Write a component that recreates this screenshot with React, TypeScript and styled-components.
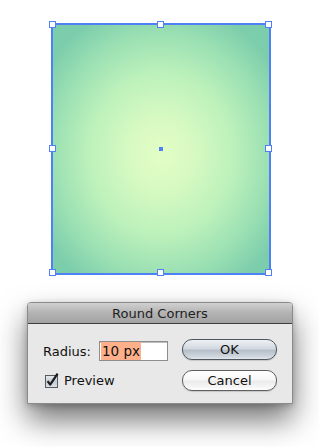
import React from "react";
import styled, { createGlobalStyle } from "styled-components";

const GlobalStyle = createGlobalStyle`
  html, body {
    margin: 0;
    padding: 0;
    background: #ffffff;
  }
  body {
    width: 319px;
    height: 447px;
    overflow: hidden;
    font-family: "DejaVu Sans", "Liberation Sans", sans-serif;
  }
`;

const Page = styled.div`
  display: flex;
  flex-direction: column;
  padding-top: 23px;
`;

const Canvas = styled.div`
  display: flex;
  padding-left: 51px;
`;

const Frame = styled.div`
  position: relative;
  width: 216px;
  height: 248px;
  border: 2px solid #4f80f6;
  background: radial-gradient(
    ellipse 64% 62% at 50% 52%,
    #e2fec6 0%,
    #d8fac2 22%,
    #bdf1bb 52%,
    #9be0b3 78%,
    #7ccdac 100%
  );
`;

const Handle = styled.div<{ $x: number; $y: number }>`
  position: absolute;
  width: 5px;
  height: 5px;
  background: #ffffff;
  border: 1px solid #4f80f6;
  left: calc(${({ $x }) => $x}% - 4px);
  top: calc(${({ $y }) => $y}% - 4px);
`;

const CenterDot = styled.div`
  position: absolute;
  left: calc(50% - 2px);
  top: calc(50% - 2px);
  width: 4px;
  height: 4px;
  background: #4f80f6;
`;

const Dialog = styled.div`
  margin: 27px 0 0 27px;
  width: 264px;
  height: 100px;
  border: 1px solid #8a8a8a;
  border-radius: 4px 4px 0 0;
  background: #e8e8e8;
  box-shadow: 0 16px 30px rgba(0, 0, 0, 0.55), 0 2px 6px rgba(0, 0, 0, 0.2);
  display: flex;
  flex-direction: column;
`;

const TitleBar = styled.div`
  height: 20px;
  border-bottom: 1px solid #3e3e3e;
  border-radius: 3px 3px 0 0;
  background: linear-gradient(#d0d0d0, #b3b3b3 50%, #a3a3a3);
  display: flex;
  align-items: center;
  justify-content: center;
  font-size: 13px;
  color: #1e1e1e;
`;

const Body = styled.div`
  display: flex;
  justify-content: space-between;
  padding: 15px 15px 0 15px;
`;

const Fields = styled.div`
  display: flex;
  flex-direction: column;
  padding-top: 2px;
  gap: 11px;
`;

const Row = styled.div`
  display: flex;
  align-items: center;
  height: 20px;
`;

const Label = styled.span`
  font-size: 13px;
  color: #111;
  width: 56px;
`;

const Input = styled.div`
  width: 66px;
  height: 18px;
  border: 1px solid #8d8d8d;
  box-shadow: inset 0 1px 0 #bdbdbd;
  background: #ffffff;
  display: flex;
  align-items: center;
  padding-left: 1px;
  box-sizing: content-box;
`;

const Selected = styled.span`
  background: #ffb08a;
  font-size: 13.5px;
  color: #111;
  padding: 1px;
  line-height: 16px;
`;

const CheckRow = styled.label`
  display: flex;
  align-items: center;
  gap: 4px;
  padding-left: 2px;
  height: 16px;
  font-size: 13px;
  color: #111;
`;

const Buttons = styled.div`
  display: flex;
  flex-direction: column;
  gap: 10px;
`;

const Button = styled.div<{ $primary?: boolean }>`
  width: 93px;
  height: 19px;
  border-radius: 10px;
  border: 1px solid ${({ $primary }) => ($primary ? "#4f565e" : "#5f5f5f")};
  background: ${({ $primary }) =>
    $primary
      ? "linear-gradient(#eef1f5 0%, #d3d9e0 45%, #b6bfc9 55%, #cdd4dc 85%, #e2e7ec 100%)"
      : "linear-gradient(#ffffff 0%, #f7f7f7 45%, #ebebeb 55%, #f6f6f6 85%, #ffffff 100%)"};
  box-shadow: 0 1px 1px rgba(0, 0, 0, 0.15);
  display: flex;
  align-items: center;
  justify-content: center;
  font-size: 13px;
  color: #111;
`;

const Checkbox = () => (
  <svg width="15" height="15" viewBox="0 0 15 15">
    <defs>
      <linearGradient id="cb" x1="0" y1="0" x2="0" y2="1">
        <stop offset="0" stopColor="#e9edf1" />
        <stop offset="0.5" stopColor="#c3cbd3" />
        <stop offset="1" stopColor="#dfe4e9" />
      </linearGradient>
    </defs>
    <rect x="0.5" y="2.5" width="12" height="12" fill="url(#cb)" stroke="#555b62" />
    <path
      d="M2.6 8.2 L5.2 11.6 L12.6 0.6"
      fill="none"
      stroke="#1c1c1c"
      strokeWidth="2.2"
      strokeLinejoin="round"
    />
  </svg>
);

const handles = [
  [0, 0],
  [50, 0],
  [100, 0],
  [0, 50],
  [100, 50],
  [0, 100],
  [50, 100],
  [100, 100],
];

export default function App() {
  return (
    <>
      <GlobalStyle />
      <Page>
        <Canvas>
          <Frame>
            {handles.map(([x, y]) => (
              <Handle key={`${x}-${y}`} $x={x} $y={y} />
            ))}
            <CenterDot />
          </Frame>
        </Canvas>
        <Dialog>
          <TitleBar>Round Corners</TitleBar>
          <Body>
            <Fields>
              <Row>
                <Label>Radius:</Label>
                <Input>
                  <Selected>10 px</Selected>
                </Input>
              </Row>
              <CheckRow>
                <Checkbox />
                Preview
              </CheckRow>
            </Fields>
            <Buttons>
              <Button $primary>OK</Button>
              <Button>Cancel</Button>
            </Buttons>
          </Body>
        </Dialog>
      </Page>
    </>
  );
}
